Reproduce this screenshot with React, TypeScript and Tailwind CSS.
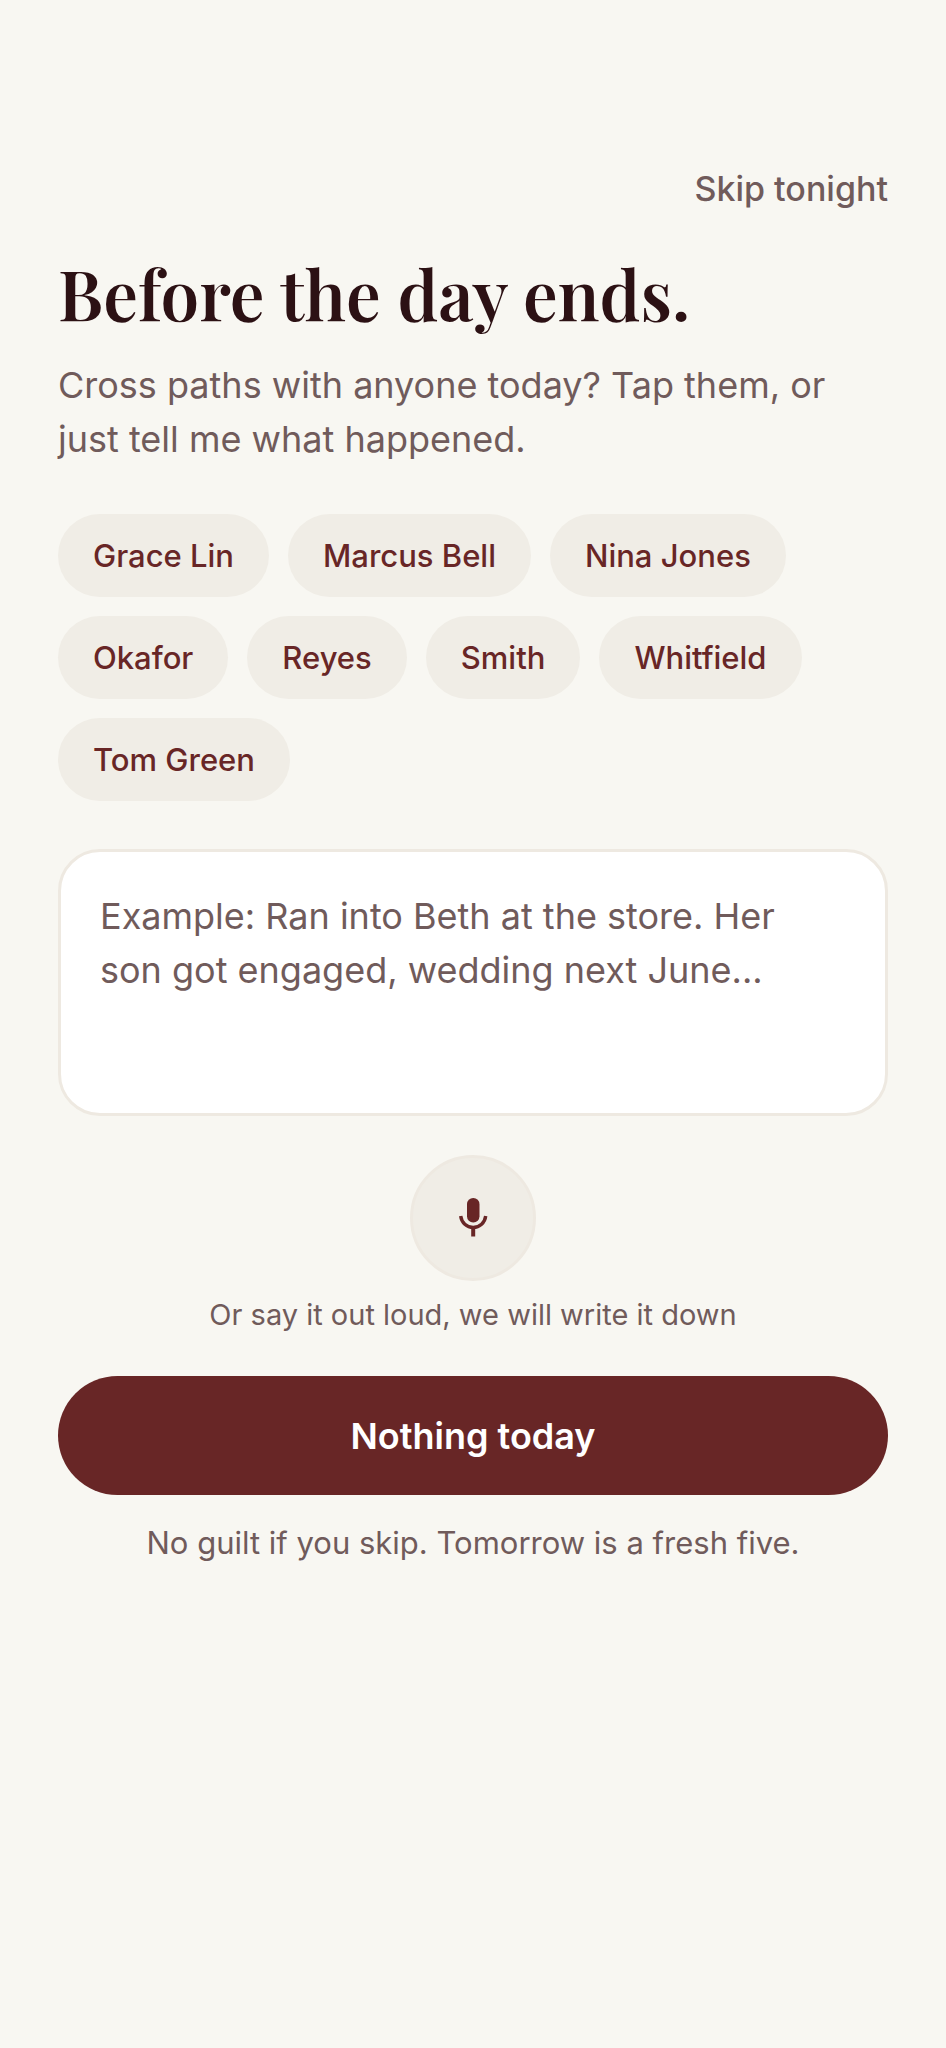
import React, { useState } from 'react'

const people = ['Grace Lin', 'Marcus Bell', 'Nina Jones', 'Okafor', 'Reyes', 'Smith', 'Whitfield', 'Tom Green']

const MicIcon = () => (
    <svg width="30" height="42" viewBox="0 0 30 42" fill="none" aria-hidden="true">
        <rect x="9" y="1" width="12.5" height="24.5" rx="6.2" fill="#682626" />
        <path d="M2.7 19c.8 6.6 6 11.4 12.5 11.4S26.9 25.6 27.7 19" stroke="#682626" strokeWidth="3.4" />
        <path d="M15.2 31v8.5" stroke="#682626" strokeWidth="4" />
    </svg>
)

const App = () => {

    const [selected, setSelected] = useState<string[]>([])
    const [note, setNote] = useState("")

    const togglePerson = (name: string) => {
        setSelected(prev => prev.includes(name) ? prev.filter(each => each !== name) : [...prev, name])
    }

    return (
        <main className="min-h-screen bg-[#f8f7f2] px-[58px] pt-[162px] pb-16 font-['Inter',sans-serif] text-[#705b5b]">
            <div className="flex justify-end">
                <button type="button" className="text-[34px] leading-[54px] font-medium">Skip tonight</button>
            </div>

            <h1 className="mt-8 font-['Playfair_Display','Liberation_Serif',serif] text-[69px] leading-[88px] font-semibold text-[#2c1114]">Before the day ends.</h1>
            <p className="mt-[22px] text-[36px] leading-[54px]">
                Cross paths with anyone today? Tap them, or just tell me what happened.
            </p>

            <div className="mt-12 flex flex-wrap gap-[19px]">
                {
                    people.map((name) => (
                        <button
                            key={name}
                            type="button"
                            aria-pressed={selected.includes(name)}
                            onClick={() => togglePerson(name)}
                            className={`h-[83px] rounded-full px-[35px] pt-0.5 text-[31px] font-medium ${selected.includes(name) ? "bg-[#682626] text-white" : "bg-[#f0ede6] text-[#682626]"}`}
                        >
                            {name}
                        </button>
                    ))
                }
            </div>

            <textarea
                aria-label="What happened today"
                value={note}
                onChange={(e) => setNote(e.target.value)}
                placeholder="Example: Ran into Beth at the store. Her son got engaged, wedding next June..."
                className="mt-12 block h-[267px] w-full resize-none rounded-[42px] border-3 border-[#eee9e1] bg-white px-[39px] py-[37px] text-[36px] leading-[54px] outline-none placeholder:text-[#705b5b]"
            />

            <div className="mt-[39px] flex flex-col items-center">
                <button type="button" aria-label="Record a voice note" className="flex size-[126px] items-center justify-center rounded-full border-3 border-[#eee9e1] bg-[#f0ede6]">
                    <MicIcon />
                </button>
                <p className="mt-3 text-[29px] leading-[44px]">Or say it out loud, we will write it down</p>
            </div>

            <button type="button" className="mt-[39px] h-[119px] w-full rounded-full bg-[#682626] text-[36px] font-semibold text-white">Nothing today</button>
            <p className="mt-6 text-center text-[31px] leading-[48px]">No guilt if you skip. Tomorrow is a fresh five.</p>
        </main>
    )
}

export default App
